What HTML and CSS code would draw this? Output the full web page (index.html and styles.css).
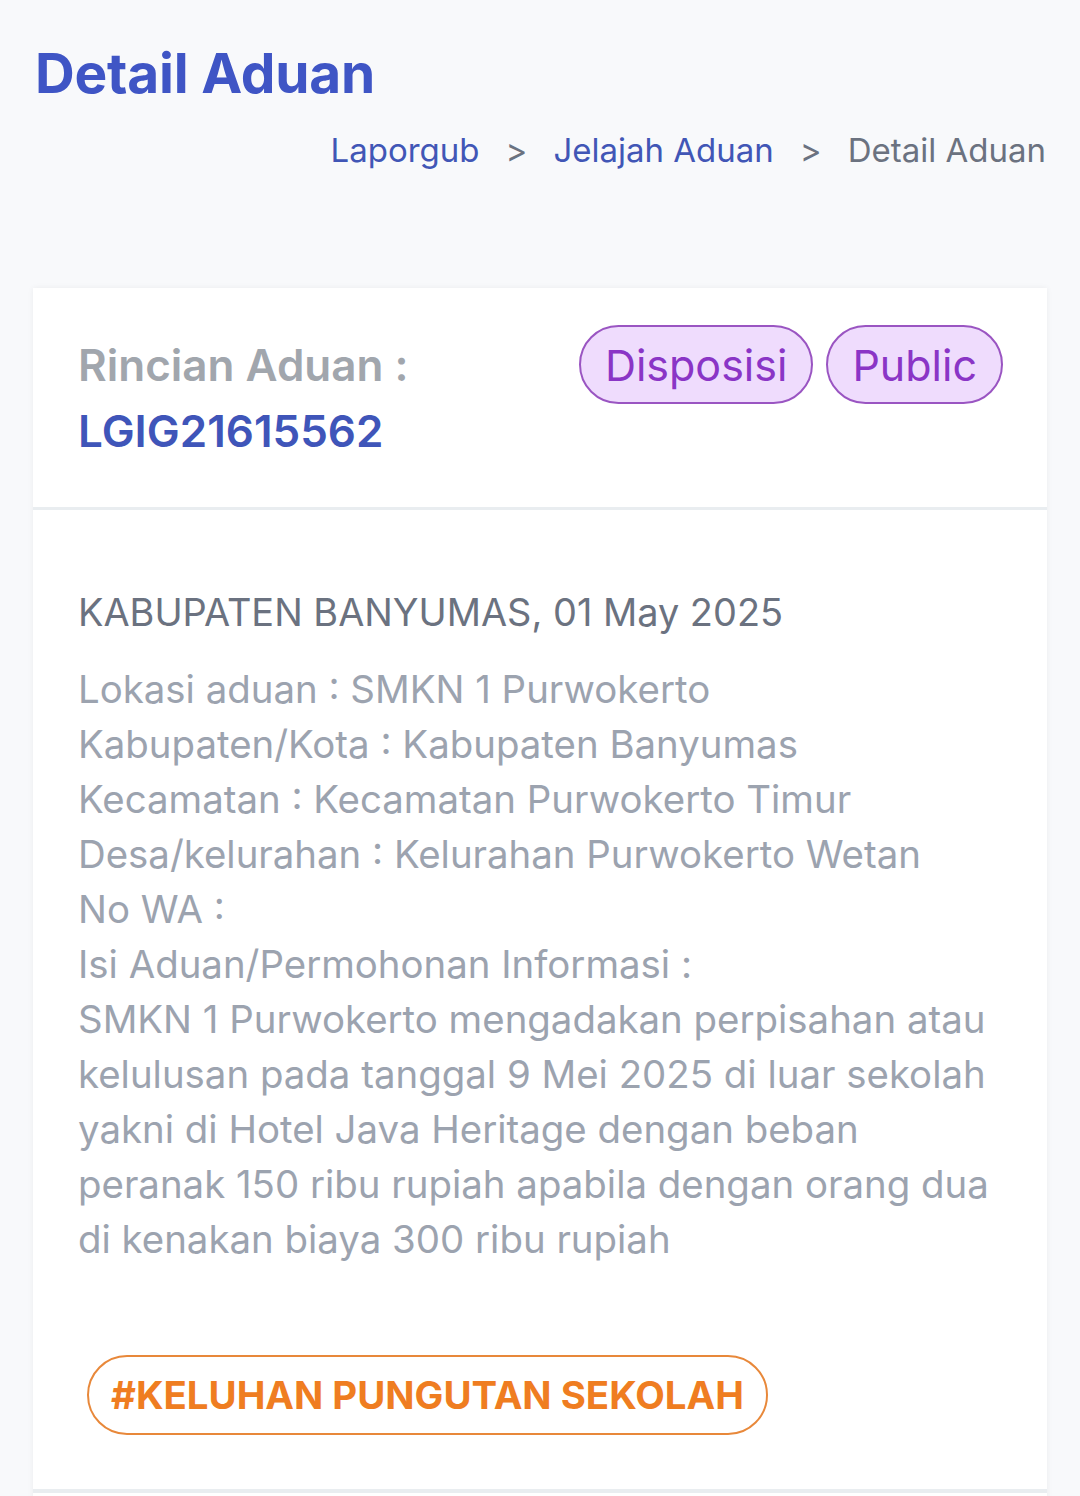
FILE: index.html
```html
<!DOCTYPE html>
<html lang="id">
<head>
<meta charset="utf-8">
<title>Detail Aduan</title>
<link rel="stylesheet" href="styles.css">
</head>
<body>
<header class="page-head">
  <h1 class="page-title">Detail Aduan</h1>
  <nav class="crumbs">
    <a class="crumb-link" href="#">Laporgub</a>
    <span class="crumb-sep">&gt;</span>
    <a class="crumb-link" href="#">Jelajah Aduan</a>
    <span class="crumb-sep">&gt;</span>
    <span class="crumb-current">Detail Aduan</span>
  </nav>
</header>

<section class="card">
  <div class="card-head">
    <div class="head-title">
      <div class="head-label">Rincian Aduan :</div>
      <div class="head-code">LGIG21615562</div>
    </div>
    <div class="badges">
      <span class="badge">Disposisi</span>
      <span class="badge">Public</span>
    </div>
  </div>
  <div class="card-body">
    <p class="place-date">KABUPATEN BANYUMAS, 01 May 2025</p>
    <div class="details">
      <p>Lokasi aduan : SMKN 1 Purwokerto</p>
      <p>Kabupaten/Kota : Kabupaten Banyumas</p>
      <p>Kecamatan : Kecamatan Purwokerto Timur</p>
      <p>Desa/kelurahan : Kelurahan Purwokerto Wetan</p>
      <p>No WA :</p>
      <p>Isi Aduan/Permohonan Informasi :</p>
      <p>SMKN 1 Purwokerto mengadakan perpisahan atau kelulusan pada tanggal 9 Mei 2025 di luar sekolah yakni di Hotel Java Heritage dengan beban peranak 150 ribu rupiah apabila dengan orang dua di kenakan biaya 300 ribu rupiah</p>
    </div>
    <div class="tags">
      <span class="tag">#KELUHAN PUNGUTAN SEKOLAH</span>
    </div>
  </div>
  <div class="card-foot"></div>
</section>
</body>
</html>
```

FILE: styles.css
```css
html, body {
  margin: 0;
  padding: 0;
}
body {
  background: #f8f9fb;
  font-family: Inter, "Noto Sans", sans-serif;
  color: #6b7280;
  height: 1496px;
  overflow: hidden;
}
.page-head {
  padding: 38px 34px 0 35px;
}
.page-title {
  margin: 0;
  font-size: 55px;
  line-height: 70px;
  font-weight: 700;
  color: #3f55c5;
  letter-spacing: -0.2px;
}
.crumbs {
  display: flex;
  justify-content: flex-end;
  align-items: center;
  gap: 26px;
  margin-top: 20px;
  font-size: 33px;
  line-height: 44px;
}
.crumb-link {
  color: #4156b6;
  text-decoration: none;
}
.crumb-sep {
  color: #6b7280;
}
.crumb-current {
  color: #6b7280;
}
.card {
  margin: 116px 33px 0 33px;
  background: #ffffff;
  box-shadow: 0 0 6px rgba(0, 0, 0, 0.06);
}
.card-head {
  display: flex;
  justify-content: space-between;
  align-items: flex-start;
  padding: 37px 44px 0 45px;
  height: 182px;
  border-bottom: 3px solid #e9edf0;
}
.head-label {
  font-size: 44px;
  line-height: 66px;
  font-weight: 600;
  color: #a1a6ad;
  margin-top: 7px;
}
.head-code {
  font-size: 44px;
  line-height: 66px;
  font-weight: 600;
  color: #3f55b9;
}
.badges {
  display: flex;
  gap: 13px;
}
.badge {
  display: inline-flex;
  align-items: center;
  height: 75px;
  padding: 0 24px;
  border: 2px solid #9a55c2;
  border-radius: 40px;
  background: #efdcfd;
  color: #8a35c6;
  font-size: 43px;
}
.card-body {
  padding: 75px 45px 0 45px;
  height: 904px;
  border-bottom: 4px solid #e9edf0;
}
.place-date {
  margin: 0 0 22px 0;
  font-size: 37.9px;
  line-height: 55px;
  color: #6b7280;
}
.details p {
  margin: 0;
  font-size: 38.4px;
  line-height: 55px;
  color: #9ca3af;
}
.tags {
  margin-top: 88px;
  padding-left: 9px;
}
.tag {
  display: inline-flex;
  align-items: center;
  box-sizing: border-box;
  height: 80px;
  padding: 0 22px;
  border: 2px solid #e8883a;
  border-radius: 40px;
  color: #ef7d21;
  font-size: 38.4px;
  font-weight: 700;
}
.card-foot {
  height: 40px;
}
```
